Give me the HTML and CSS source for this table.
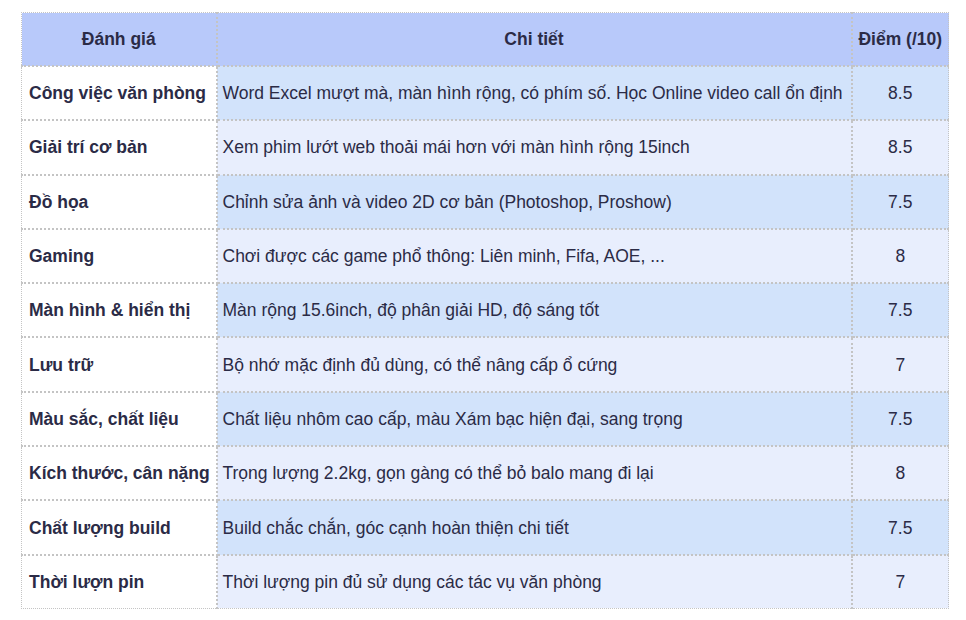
FILE: index.html
```html
<!DOCTYPE html>
<html lang="vi">
<head>
<meta charset="utf-8">
<link rel="stylesheet" href="styles.css">
</head>
<body>
<table class="review">
  <colgroup>
    <col class="c1"><col class="c2"><col class="c3">
  </colgroup>
  <thead>
    <tr><th>Đánh giá</th><th>Chi tiết</th><th>Điểm (/10)</th></tr>
  </thead>
  <tbody>
    <tr><td>Công việc văn phòng</td><td>Word Excel mượt mà, màn hình rộng, có phím số. Học Online video call ổn định</td><td>8.5</td></tr>
    <tr><td>Giải trí cơ bản</td><td>Xem phim lướt web thoải mái hơn với màn hình rộng 15inch</td><td>8.5</td></tr>
    <tr><td>Đồ họa</td><td>Chỉnh sửa ảnh và video 2D cơ bản (Photoshop, Proshow)</td><td>7.5</td></tr>
    <tr><td>Gaming</td><td>Chơi được các game phổ thông: Liên minh, Fifa, AOE, ...</td><td>8</td></tr>
    <tr><td>Màn hình &amp; hiển thị</td><td>Màn rộng 15.6inch, độ phân giải HD, độ sáng tốt</td><td>7.5</td></tr>
    <tr><td>Lưu trữ</td><td>Bộ nhớ mặc định đủ dùng, có thể nâng cấp ổ cứng</td><td>7</td></tr>
    <tr><td>Màu sắc, chất liệu</td><td>Chất liệu nhôm cao cấp, màu Xám bạc hiện đại, sang trọng</td><td>7.5</td></tr>
    <tr><td>Kích thước, cân nặng</td><td>Trọng lượng 2.2kg, gọn gàng có thể bỏ balo mang đi lại</td><td>8</td></tr>
    <tr><td>Chất lượng build</td><td>Build chắc chắn, góc cạnh hoàn thiện chi tiết</td><td>7.5</td></tr>
    <tr><td>Thời lượn pin</td><td>Thời lượng pin đủ sử dụng các tác vụ văn phòng</td><td>7</td></tr>
  </tbody>
</table>
</body>
</html>
```
FILE: styles.css
```css
html, body {
  margin: 0;
  background: #ffffff;
}
body {
  padding: 12px 18px 0 21px;
  font-family: "Liberation Sans", Arial, sans-serif;
  font-size: 17.5px;
  color: #2b2b46;
}
.review {
  border-collapse: collapse;
  width: 927px;
  border: 1px dotted #c4c4c4;
  table-layout: fixed;
}
.c1 { width: 195px; }
.c2 { width: 635px; }
.c3 { width: 97px; }
.review th,
.review td {
  height: 52.3px;
  padding: 0 5px 0 5px;
  border-right: 2px dotted #c4c4c4;
  border-bottom: 2px dotted #c4c4c4;
  vertical-align: middle;
  white-space: nowrap;
  line-height: 20px;
}
.review th {
  height: 52px;
}
.review th:last-child,
.review td:last-child {
  border-right: none;
}
.review tbody tr:last-child td {
  border-bottom: none;
}
.review th {
  background: #b8c9fa;
  font-weight: bold;
  text-align: center;
}
.review td:first-child {
  background: #ffffff;
  font-weight: bold;
  padding-left: 7px;
}
.review td:last-child {
  text-align: center;
}
.review tbody tr:nth-child(odd) td:not(:first-child) {
  background: #d2e3fb;
}
.review tbody tr:nth-child(even) td:not(:first-child) {
  background: #e8eefd;
}
```
